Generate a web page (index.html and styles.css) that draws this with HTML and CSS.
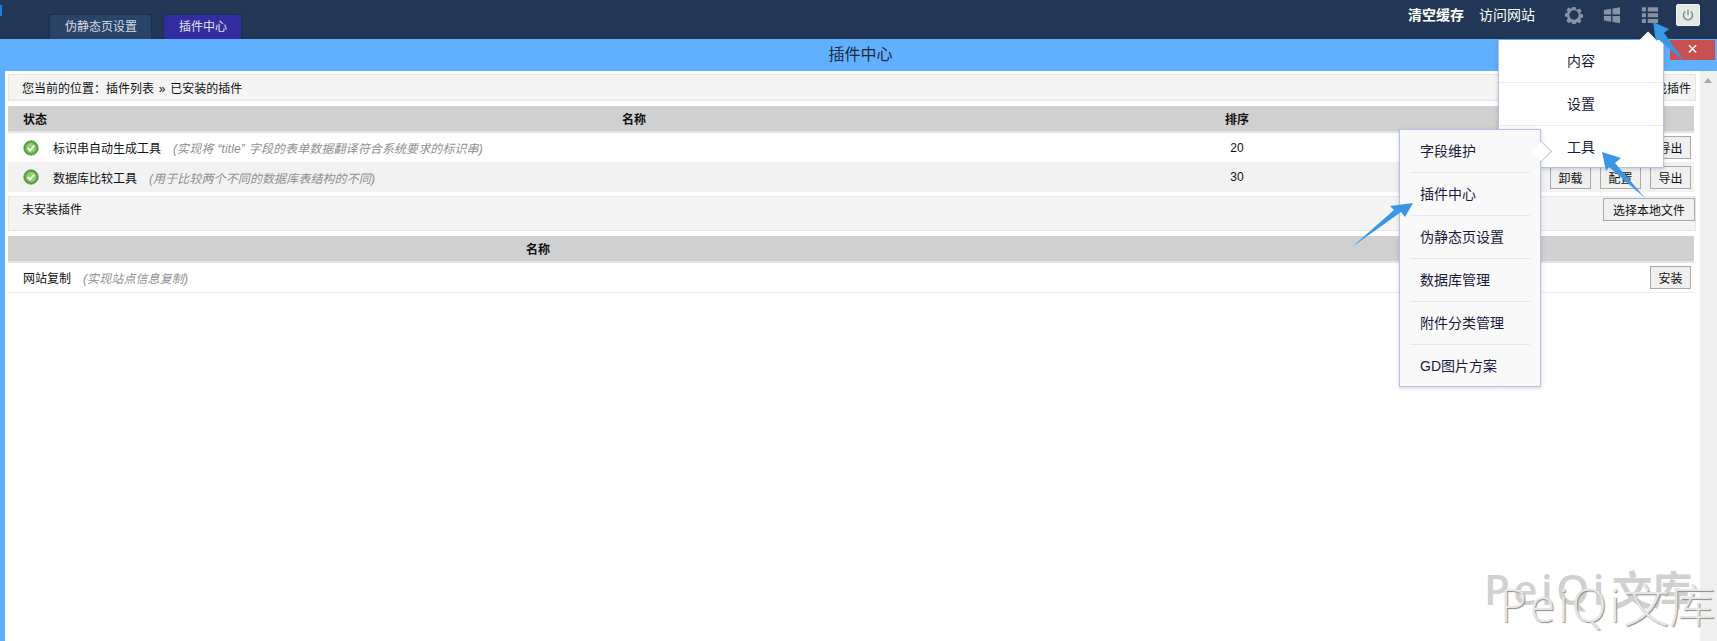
FILE: index.html
```html
<!DOCTYPE html>
<html lang="zh-CN">
<head>
    <meta charset="UTF-8">
    <title>插件中心</title>
    <link rel="stylesheet" href="styles.css">
</head>
<body>

<header class="topbar">
    <span class="logo-edge"></span>
    <nav class="tabs">
        <a class="tab">伪静态页设置</a>
        <a class="tab tab-active">插件中心</a>
    </nav>
    <div class="top-links">
        <a class="strong">清空缓存</a>
        <a>访问网站</a>
    </div>
    <div class="top-icons">
        <svg class="icon" viewBox="0 0 20 20">
            <path d="M8.2 1h3.6l.5 2.500 1.400.6 2.200-1.400 2.500 2.500-1.400 2.200.6 1.400 2.400.5v3.400l-2.400.5-.6 1.400 1.400 2.200-2.500 2.500-2.200-1.400-1.400.6-.5 2.400H8.200l-.5-2.400-1.400-.6-2.200 1.400-2.500-2.500L3 13.600l-.6-1.400L0 11.700V8.300l2.400-.5.6-1.400-1.400-2.200 2.500-2.500 2.200 1.400 1.400-.6zM10 4.800a5.200 5.200 0 1 0 0 10.400 5.200 5.200 0 0 0 0-10.400z" fill-rule="evenodd"/>
        </svg>
        <svg class="icon" viewBox="0 0 20 20">
            <path d="M1 4.500l8-1.400v6.400H1zM10.500 2.800L19 1.400v8.100h-8.500zM1 11h8v6.400l-8-1.400zM10.500 11H19v8.100l-8.500-1.400z"/>
        </svg>
        <svg class="icon" viewBox="0 0 20 20">
            <path d="M1 1.500h4.500v4.500H1zM7.500 1.500H19v4.500H7.500zM1 8h4.500v4.500H1zM7.500 8H19v4.500H7.500zM1 14.500h4.500V19H1zM7.500 14.500H19V19H7.500z"/>
        </svg>
        <button class="power">
            <svg viewBox="0 0 16 16"><path d="M5 4a5.200 5.200 0 1 0 6 0M8 2v6" fill="none" stroke="#7d8a8a" stroke-width="1.500"/></svg>
        </button>
    </div>
</header>

<div class="window">
    <div class="title-bar">
        <span>插件中心</span>
        <a class="close">×</a>
    </div>
    <div class="window-body">
        <main class="content">
            <div class="crumb">
                <span class="crumb-path">您当前的位置：插件列表 » 已安装的插件</span>
                <a>查找插件</a>
            </div>

            <div class="row head installed">
                <span class="status-title">状态</span>
                <span class="center">名称</span>
                <span class="center">排序</span>
                <span></span>
            </div>
            <div class="row installed">
                <svg class="ok" viewBox="0 0 16 16">
                    <circle cx="8" cy="8" r="7.200" fill="#5fa548" stroke="#4c8f3c" stroke-width=".8"/>
                    <circle cx="8" cy="8" r="5" fill="#8fd070"/>
                    <path d="M4.800 8l2.300 2.400 4.200-4.800" fill="none" stroke="#fff" stroke-width="1.800"/>
                </svg>
                <span class="plugin">标识串自动生成工具<em>(实现将<span class="quoted">“title”</span>字段的表单数据翻译符合系统要求的标识串)</em></span>
                <span class="center">20</span>
                <span class="actions"><button>卸载</button><button>配置</button><button>导出</button></span>
            </div>
            <div class="row installed alt">
                <svg class="ok" viewBox="0 0 16 16">
                    <circle cx="8" cy="8" r="7.200" fill="#5fa548" stroke="#4c8f3c" stroke-width=".8"/>
                    <circle cx="8" cy="8" r="5" fill="#8fd070"/>
                    <path d="M4.800 8l2.300 2.400 4.200-4.800" fill="none" stroke="#fff" stroke-width="1.800"/>
                </svg>
                <span class="plugin">数据库比较工具<em>(用于比较两个不同的数据库表结构的不同)</em></span>
                <span class="center">30</span>
                <span class="actions"><button>卸载</button><button>配置</button><button>导出</button></span>
            </div>

            <div class="section">
                <span class="section-title">未安装插件</span>
                <button>选择本地文件</button>
            </div>

            <div class="row head available">
                <span class="center">名称</span>
                <span></span>
            </div>
            <div class="row available line">
                <span class="plugin first">网站复制<em>(实现站点信息复制)</em></span>
                <span class="actions"><button>安装</button></span>
            </div>
        </main>
        <div class="scrollbar"><span class="scroll-up"></span></div>
    </div>
</div>

<!-- menus opened over the page -->
<ul class="menu menu-main">
    <li>内容</li>
    <li>设置</li>
    <li>工具</li>
</ul>
<ul class="menu menu-sub">
    <li>字段维护</li>
    <li>插件中心</li>
    <li>伪静态页设置</li>
    <li>数据库管理</li>
    <li>附件分类管理</li>
    <li>GD图片方案</li>
</ul>

<svg class="arrows" viewBox="0 0 1717 641">
    <polygon points="1653,22 1669,29 1664,33 1685,62 1658,39 1656,41"/>
    <polygon points="1602,152 1621,158 1615,163 1645,198 1609,167 1606,171"/>
    <polygon points="1413,203 1405,217 1401,212 1352,247 1394,210 1390,206"/>
</svg>

<div class="mark mark-back"><span class="mark-latin">PeiQi</span>文库</div>
<div class="mark mark-front"><span class="mark-latin">PeiQi</span>文库</div>

</body>
</html>
```

FILE: styles.css
```css
* {
    box-sizing: border-box;
}
html, body {
    height: 100%;
}
body {
    margin: 0;
    overflow: hidden;
    position: relative;
    font-family: "Liberation Sans", "Noto Sans CJK SC", sans-serif;
    font-size: 12px;
    color: #111;
    background-color: #fff;
    display: flex;
    flex-direction: column;
}
.topbar {
    height: 39px;
    flex: none;
    display: flex;
    align-items: flex-start;
    background-color: #213755;
    position: relative;
}
.logo-edge {
    position: absolute;
    left: 0;
    top: 5px;
    width: 2px;
    height: 11px;
    background-color: #1f7fd8;
}
.tabs {
    display: flex;
    gap: 11px;
    margin: 14px 0 0 49px;
}
.tab {
    height: 25px;
    padding: 0 14px 0 15px;
    line-height: 24px;
    color: #d5dbe4;
    background-color: #2a4468;
    border: 1px solid #1c2f4d;
    border-bottom: none;
    border-radius: 3px 3px 0 0;
}
.tab-active {
    color: #e4e4f4;
    background-color: #322ea0;
}
.top-links {
    display: flex;
    gap: 15px;
    margin: 5px 0 0 auto;
    font-size: 14px;
    line-height: 20px;
    color: #fff;
}
.strong {
    font-weight: bold;
}
.top-icons {
    display: flex;
    align-items: center;
    margin: 4px 17px 0 30px;
    gap: 20px;
}
.icon {
    width: 18px;
    height: 18px;
    fill: #8792a2;
}
.power {
    width: 24px;
    height: 22px;
    margin-left: -3px;
    padding: 3px 0 0;
    background-color: #e2e8e4;
    border: 1px solid #f1f3f1;
    border-radius: 2px;
}
.power svg {
    width: 14px;
    height: 14px;
}
.window {
    flex: 1;
    display: flex;
    flex-direction: column;
    background-color: #61b0ff;
    padding-left: 5px;
}
.title-bar {
    height: 32px;
    flex: none;
    position: relative;
    text-align: center;
    font-size: 16px;
    line-height: 32px;
    color: #1c2b3c;
    padding-right: 1px;
}
.close {
    position: absolute;
    right: 2px;
    top: 1px;
    width: 45px;
    height: 20px;
    line-height: 19px;
    font-size: 18px;
    color: #fff;
    background-color: #c75050;
}
.window-body {
    flex: 1;
    display: flex;
    background-color: #fff;
}
.content {
    flex: 1;
    padding: 3px 4px 0 3px;
}
.scrollbar {
    width: 17px;
    background-color: #f0f0f0;
    padding: 7px 0 0 4px;
}
.scroll-up {
    display: block;
    width: 0;
    height: 0;
    border: 4px solid transparent;
    border-top: none;
    border-bottom: 5px solid #a6a6a6;
}
.crumb {
    height: 27px;
    display: flex;
    justify-content: space-between;
    align-items: center;
    padding: 0 4px 0 13px;
    background-color: #f4f4f4;
    border: 1px solid #e6e6e6;
    margin-bottom: 5px;
}
.crumb-path {
    word-spacing: 1.500px;
}
.row {
    display: grid;
    align-items: center;
    margin-right: 2px;
}
.installed {
    grid-template-columns: 38px 1176px 30px 1fr;
    height: 29px;
}
.available {
    grid-template-columns: 1060px 1fr;
    height: 30px;
}
.head {
    height: 27px;
    font-weight: bold;
    background-color: #d0d0d0;
    border-bottom: 2px solid #e4e4e4;
}
.status-title {
    padding-left: 15px;
    white-space: nowrap;
}
.center {
    text-align: center;
}
.alt {
    height: 30px;
    background-color: #f2f2f2;
}
.line {
    border-bottom: 1px solid #ededed;
}
.ok {
    width: 16px;
    height: 16px;
    margin-left: 15px;
}
.plugin {
    padding-left: 7px;
}
.plugin.first {
    padding-left: 15px;
}
.plugin em {
    color: #8f8f8f;
    margin-left: 12px;
    letter-spacing: 0.1px;
}
.quoted {
    padding: 0 4px;
}
.actions {
    display: flex;
    justify-content: flex-end;
    gap: 9px;
    padding-right: 3px;
}
button {
    height: 23px;
    padding: 0 7.500px;
    font-family: inherit;
    font-size: 12px;
    color: #111;
    background-color: #f0f0f0;
    border: 1px solid #aaa;
}
.section {
    height: 35px;
    margin-top: 4px;
    margin-bottom: 5px;
    padding: 1px 0 0 13px;
    display: flex;
    justify-content: space-between;
    align-items: flex-start;
    line-height: 18px;
    background-color: #f4f4f4;
    border: 1px solid #e6e6e6;
}
.section button {
    padding: 0 9px;
}
.section-title {
    margin-top: 3px;
}
.menu {
    position: absolute;
    margin: 0;
    padding: 0;
    list-style: none;
    font-size: 14px;
    color: #1a1a3c;
    border: 1px solid #b5c3e0;
    box-shadow: 0 1px 4px rgba(60, 70, 100, 0.25);
}
.menu li {
    height: 43px;
    line-height: 43px;
}
.menu-main {
    left: 1498px;
    top: 40px;
    width: 166px;
    height: 128px;
    text-align: center;
    background-color: #fff;
    border-top: none;
}
.menu-main li {
    border-bottom: 1px solid #e3e8f2;
}
.menu-main li:last-child {
    border-bottom: none;
}
.menu-main::before {
    content: "";
    position: absolute;
    left: 143px;
    top: -6px;
    width: 12px;
    height: 12px;
    background-color: #fff;
    transform: rotate(45deg);
}
.menu-sub {
    left: 1399px;
    top: 129px;
    width: 142px;
    height: 258px;
    padding: 0 10px;
    background-color: #f9f9f9;
}
.menu-sub li {
    padding-left: 10px;
    border-bottom: 1px solid #e1e6f5;
}
.menu-sub li:last-child {
    border-bottom: none;
}
.menu-sub::after {
    content: "";
    position: absolute;
    left: 134px;
    top: 14px;
    width: 14px;
    height: 14px;
    background-color: #fff;
    border-top: 1px solid #b5c3e0;
    border-right: 1px solid #b5c3e0;
    transform: rotate(45deg);
}
.arrows {
    position: absolute;
    left: 0;
    top: 0;
    width: 1717px;
    height: 641px;
    fill: #3a97e6;
    pointer-events: none;
}
.mark {
    position: absolute;
    white-space: nowrap;
    pointer-events: none;
    font-family: "Open Sans", "Noto Sans CJK SC", sans-serif;
}
.mark-back {
    left: 1484px;
    top: 563px;
    font-size: 40px;
    font-weight: 600;
    line-height: 52px;
    color: #d0d0d0;
}
.mark-back .mark-latin {
    font-size: 42px;
    letter-spacing: 3.500px;
    margin-right: 4px;
}
.mark-front {
    left: 1500px;
    top: 573px;
    font-size: 46px;
    font-weight: 300;
    line-height: 62px;
    color: #e6e6e6;
    text-shadow: 1px 1px 1px #8a8a8a;
}
.mark-front .mark-latin {
    letter-spacing: 3px;
}
```
